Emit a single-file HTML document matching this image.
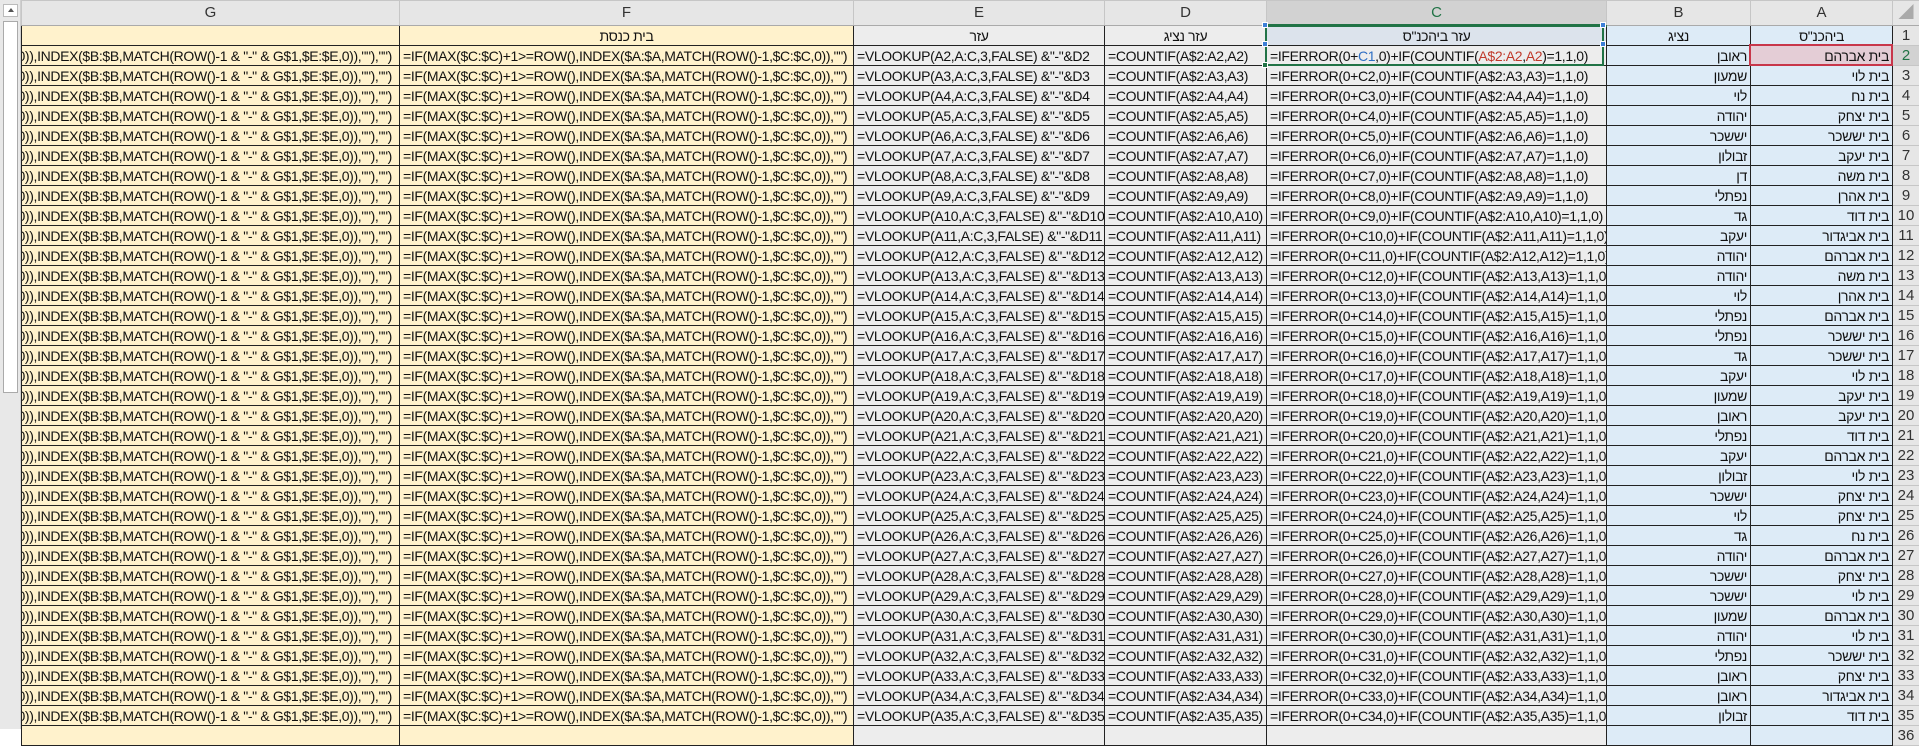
<!DOCTYPE html>
<html><head><meta charset="utf-8"><style>
*{margin:0;padding:0;box-sizing:border-box}
body{width:1919px;height:729px;overflow:hidden;background:#fff;font-family:"Liberation Sans","Noto Sans CJK SC",sans-serif;position:relative}
#sb{position:absolute;left:0;top:0;width:21px;height:729px;background:#e8e8e8;border-right:1px solid #cfcfcf}
#sb .up{position:absolute;left:3px;top:4px;width:15px;height:13px;background:#fff;border:1px solid #bbb}
#sb .up:after{content:"";position:absolute;left:4px;top:3px;border-left:3px solid transparent;border-right:3px solid transparent;border-bottom:4px solid #555}
#sb .th{position:absolute;left:3px;top:21px;width:15px;height:372px;background:#fff;border:1px solid #aaa}
table{position:absolute;left:21px;top:0;width:1898px;border-collapse:collapse;table-layout:fixed;font-size:14px;letter-spacing:-0.35px}
td{height:20px;border:1px solid #222;white-space:nowrap;overflow:hidden;padding:0 3px;line-height:18px;color:#111}
tr.h td{height:25px;background:#e6e6e6;border:1px solid #c6c6c6;border-bottom:1px solid #aaa;text-align:center;font-size:15px;color:#333;letter-spacing:0}
tr.h td.sc{background:#d2d2d2;border-bottom:2px solid #217346;color:#217346}
td.g{background:#fff2cc;padding:0}
td.g div{position:relative;width:370px;height:18px;overflow:hidden}
td.g span{position:absolute;right:0;top:0;white-space:nowrap}
td.f{background:#fff2cc}
td.e,td.d,td.c{background:#ededed}
td.b,td.a{background:#ddebf7;text-align:right;direction:rtl}
td.n{background:#e6e6e6;border:1px solid #c6c6c6;text-align:center;color:#333;letter-spacing:0;font-size:15px}
tr.r1 td{text-align:center}
td.ch{background:#dce3ec!important}
.bl{color:#2f6fc4}.rd{color:#c0392b}
.sel{position:absolute;left:1265px;top:24px;width:339px;height:42px;border:2px solid #217346;pointer-events:none}
.hd{position:absolute;width:6px;height:6px;background:#3d7fd6;border:1px solid #fff}
.asel{position:absolute;left:1749px;top:44px;width:144px;height:22px;border:2px solid #c8364a;pointer-events:none}
</style></head><body>
<div id="sb"><div class="up"></div><div class="th"></div></div>
<table>
<colgroup><col style="width:378px"><col style="width:454px"><col style="width:251px"><col style="width:162px"><col style="width:340px"><col style="width:144px"><col style="width:142px"><col style="width:27px"></colgroup>
<tr class="h"><td>G</td><td>F</td><td>E</td><td>D</td><td class="sc">C</td><td>B</td><td>A</td><td style="background:#e6e6e6;color:#aaa">◢</td></tr>
<tr class="r1"><td class="g"></td><td class="f" style="text-align:center">בית כנסת</td><td class="e">עזר</td><td class="d">עזר נציג</td><td class="c ch">עזר ביהכנ"ס</td><td class="b" style="text-align:center">נציג</td><td class="a" style="text-align:center">ביהכנ"ס</td><td class="n">1</td></tr>
<tr><td class="g"><div><span>MATCH(ROW()-1 &amp; "-" &amp; G$1,$E:$E,0)),INDEX($B:$B,MATCH(ROW()-1 &amp; "-" &amp; G$1,$E:$E,0)),""),"")</span></div></td><td class="f">=IF(MAX($C:$C)+1&gt;=ROW(),INDEX($A:$A,MATCH(ROW()-1,$C:$C,0)),"")</td><td class="e">=VLOOKUP(A2,A:C,3,FALSE) &amp;"-"&amp;D2</td><td class="d">=COUNTIF(A$2:A2,A2)</td><td class="c">=IFERROR(0+<span class="bl">C1</span>,0)+IF(COUNTIF(<span class="rd">A$2:A2</span>,<span class="rd">A2</span>)=1,1,0)</td><td class="b">ראובן</td><td class="a" style="background:#e4cdd6">בית אברהם</td><td class="n" style="background:#d2d2d2;color:#217346">2</td></tr>
<tr><td class="g"><div><span>MATCH(ROW()-1 &amp; "-" &amp; G$1,$E:$E,0)),INDEX($B:$B,MATCH(ROW()-1 &amp; "-" &amp; G$1,$E:$E,0)),""),"")</span></div></td><td class="f">=IF(MAX($C:$C)+1&gt;=ROW(),INDEX($A:$A,MATCH(ROW()-1,$C:$C,0)),"")</td><td class="e">=VLOOKUP(A3,A:C,3,FALSE) &amp;"-"&amp;D3</td><td class="d">=COUNTIF(A$2:A3,A3)</td><td class="c">=IFERROR(0+C2,0)+IF(COUNTIF(A$2:A3,A3)=1,1,0)</td><td class="b">שמעון</td><td class="a">בית לוי</td><td class="n">3</td></tr>
<tr><td class="g"><div><span>MATCH(ROW()-1 &amp; "-" &amp; G$1,$E:$E,0)),INDEX($B:$B,MATCH(ROW()-1 &amp; "-" &amp; G$1,$E:$E,0)),""),"")</span></div></td><td class="f">=IF(MAX($C:$C)+1&gt;=ROW(),INDEX($A:$A,MATCH(ROW()-1,$C:$C,0)),"")</td><td class="e">=VLOOKUP(A4,A:C,3,FALSE) &amp;"-"&amp;D4</td><td class="d">=COUNTIF(A$2:A4,A4)</td><td class="c">=IFERROR(0+C3,0)+IF(COUNTIF(A$2:A4,A4)=1,1,0)</td><td class="b">לוי</td><td class="a">בית נח</td><td class="n">4</td></tr>
<tr><td class="g"><div><span>MATCH(ROW()-1 &amp; "-" &amp; G$1,$E:$E,0)),INDEX($B:$B,MATCH(ROW()-1 &amp; "-" &amp; G$1,$E:$E,0)),""),"")</span></div></td><td class="f">=IF(MAX($C:$C)+1&gt;=ROW(),INDEX($A:$A,MATCH(ROW()-1,$C:$C,0)),"")</td><td class="e">=VLOOKUP(A5,A:C,3,FALSE) &amp;"-"&amp;D5</td><td class="d">=COUNTIF(A$2:A5,A5)</td><td class="c">=IFERROR(0+C4,0)+IF(COUNTIF(A$2:A5,A5)=1,1,0)</td><td class="b">יהודה</td><td class="a">בית יצחק</td><td class="n">5</td></tr>
<tr><td class="g"><div><span>MATCH(ROW()-1 &amp; "-" &amp; G$1,$E:$E,0)),INDEX($B:$B,MATCH(ROW()-1 &amp; "-" &amp; G$1,$E:$E,0)),""),"")</span></div></td><td class="f">=IF(MAX($C:$C)+1&gt;=ROW(),INDEX($A:$A,MATCH(ROW()-1,$C:$C,0)),"")</td><td class="e">=VLOOKUP(A6,A:C,3,FALSE) &amp;"-"&amp;D6</td><td class="d">=COUNTIF(A$2:A6,A6)</td><td class="c">=IFERROR(0+C5,0)+IF(COUNTIF(A$2:A6,A6)=1,1,0)</td><td class="b">יששכר</td><td class="a">בית יששכר</td><td class="n">6</td></tr>
<tr><td class="g"><div><span>MATCH(ROW()-1 &amp; "-" &amp; G$1,$E:$E,0)),INDEX($B:$B,MATCH(ROW()-1 &amp; "-" &amp; G$1,$E:$E,0)),""),"")</span></div></td><td class="f">=IF(MAX($C:$C)+1&gt;=ROW(),INDEX($A:$A,MATCH(ROW()-1,$C:$C,0)),"")</td><td class="e">=VLOOKUP(A7,A:C,3,FALSE) &amp;"-"&amp;D7</td><td class="d">=COUNTIF(A$2:A7,A7)</td><td class="c">=IFERROR(0+C6,0)+IF(COUNTIF(A$2:A7,A7)=1,1,0)</td><td class="b">זבולון</td><td class="a">בית יעקב</td><td class="n">7</td></tr>
<tr><td class="g"><div><span>MATCH(ROW()-1 &amp; "-" &amp; G$1,$E:$E,0)),INDEX($B:$B,MATCH(ROW()-1 &amp; "-" &amp; G$1,$E:$E,0)),""),"")</span></div></td><td class="f">=IF(MAX($C:$C)+1&gt;=ROW(),INDEX($A:$A,MATCH(ROW()-1,$C:$C,0)),"")</td><td class="e">=VLOOKUP(A8,A:C,3,FALSE) &amp;"-"&amp;D8</td><td class="d">=COUNTIF(A$2:A8,A8)</td><td class="c">=IFERROR(0+C7,0)+IF(COUNTIF(A$2:A8,A8)=1,1,0)</td><td class="b">דן</td><td class="a">בית משה</td><td class="n">8</td></tr>
<tr><td class="g"><div><span>MATCH(ROW()-1 &amp; "-" &amp; G$1,$E:$E,0)),INDEX($B:$B,MATCH(ROW()-1 &amp; "-" &amp; G$1,$E:$E,0)),""),"")</span></div></td><td class="f">=IF(MAX($C:$C)+1&gt;=ROW(),INDEX($A:$A,MATCH(ROW()-1,$C:$C,0)),"")</td><td class="e">=VLOOKUP(A9,A:C,3,FALSE) &amp;"-"&amp;D9</td><td class="d">=COUNTIF(A$2:A9,A9)</td><td class="c">=IFERROR(0+C8,0)+IF(COUNTIF(A$2:A9,A9)=1,1,0)</td><td class="b">נפתלי</td><td class="a">בית אהרן</td><td class="n">9</td></tr>
<tr><td class="g"><div><span>MATCH(ROW()-1 &amp; "-" &amp; G$1,$E:$E,0)),INDEX($B:$B,MATCH(ROW()-1 &amp; "-" &amp; G$1,$E:$E,0)),""),"")</span></div></td><td class="f">=IF(MAX($C:$C)+1&gt;=ROW(),INDEX($A:$A,MATCH(ROW()-1,$C:$C,0)),"")</td><td class="e">=VLOOKUP(A10,A:C,3,FALSE) &amp;"-"&amp;D10</td><td class="d">=COUNTIF(A$2:A10,A10)</td><td class="c">=IFERROR(0+C9,0)+IF(COUNTIF(A$2:A10,A10)=1,1,0)</td><td class="b">גד</td><td class="a">בית דוד</td><td class="n">10</td></tr>
<tr><td class="g"><div><span>MATCH(ROW()-1 &amp; "-" &amp; G$1,$E:$E,0)),INDEX($B:$B,MATCH(ROW()-1 &amp; "-" &amp; G$1,$E:$E,0)),""),"")</span></div></td><td class="f">=IF(MAX($C:$C)+1&gt;=ROW(),INDEX($A:$A,MATCH(ROW()-1,$C:$C,0)),"")</td><td class="e">=VLOOKUP(A11,A:C,3,FALSE) &amp;"-"&amp;D11</td><td class="d">=COUNTIF(A$2:A11,A11)</td><td class="c">=IFERROR(0+C10,0)+IF(COUNTIF(A$2:A11,A11)=1,1,0)</td><td class="b">יעקב</td><td class="a">בית אביגדור</td><td class="n">11</td></tr>
<tr><td class="g"><div><span>MATCH(ROW()-1 &amp; "-" &amp; G$1,$E:$E,0)),INDEX($B:$B,MATCH(ROW()-1 &amp; "-" &amp; G$1,$E:$E,0)),""),"")</span></div></td><td class="f">=IF(MAX($C:$C)+1&gt;=ROW(),INDEX($A:$A,MATCH(ROW()-1,$C:$C,0)),"")</td><td class="e">=VLOOKUP(A12,A:C,3,FALSE) &amp;"-"&amp;D12</td><td class="d">=COUNTIF(A$2:A12,A12)</td><td class="c">=IFERROR(0+C11,0)+IF(COUNTIF(A$2:A12,A12)=1,1,0)</td><td class="b">יהודה</td><td class="a">בית אברהם</td><td class="n">12</td></tr>
<tr><td class="g"><div><span>MATCH(ROW()-1 &amp; "-" &amp; G$1,$E:$E,0)),INDEX($B:$B,MATCH(ROW()-1 &amp; "-" &amp; G$1,$E:$E,0)),""),"")</span></div></td><td class="f">=IF(MAX($C:$C)+1&gt;=ROW(),INDEX($A:$A,MATCH(ROW()-1,$C:$C,0)),"")</td><td class="e">=VLOOKUP(A13,A:C,3,FALSE) &amp;"-"&amp;D13</td><td class="d">=COUNTIF(A$2:A13,A13)</td><td class="c">=IFERROR(0+C12,0)+IF(COUNTIF(A$2:A13,A13)=1,1,0)</td><td class="b">יהודה</td><td class="a">בית משה</td><td class="n">13</td></tr>
<tr><td class="g"><div><span>MATCH(ROW()-1 &amp; "-" &amp; G$1,$E:$E,0)),INDEX($B:$B,MATCH(ROW()-1 &amp; "-" &amp; G$1,$E:$E,0)),""),"")</span></div></td><td class="f">=IF(MAX($C:$C)+1&gt;=ROW(),INDEX($A:$A,MATCH(ROW()-1,$C:$C,0)),"")</td><td class="e">=VLOOKUP(A14,A:C,3,FALSE) &amp;"-"&amp;D14</td><td class="d">=COUNTIF(A$2:A14,A14)</td><td class="c">=IFERROR(0+C13,0)+IF(COUNTIF(A$2:A14,A14)=1,1,0)</td><td class="b">לוי</td><td class="a">בית אהרן</td><td class="n">14</td></tr>
<tr><td class="g"><div><span>MATCH(ROW()-1 &amp; "-" &amp; G$1,$E:$E,0)),INDEX($B:$B,MATCH(ROW()-1 &amp; "-" &amp; G$1,$E:$E,0)),""),"")</span></div></td><td class="f">=IF(MAX($C:$C)+1&gt;=ROW(),INDEX($A:$A,MATCH(ROW()-1,$C:$C,0)),"")</td><td class="e">=VLOOKUP(A15,A:C,3,FALSE) &amp;"-"&amp;D15</td><td class="d">=COUNTIF(A$2:A15,A15)</td><td class="c">=IFERROR(0+C14,0)+IF(COUNTIF(A$2:A15,A15)=1,1,0)</td><td class="b">נפתלי</td><td class="a">בית אברהם</td><td class="n">15</td></tr>
<tr><td class="g"><div><span>MATCH(ROW()-1 &amp; "-" &amp; G$1,$E:$E,0)),INDEX($B:$B,MATCH(ROW()-1 &amp; "-" &amp; G$1,$E:$E,0)),""),"")</span></div></td><td class="f">=IF(MAX($C:$C)+1&gt;=ROW(),INDEX($A:$A,MATCH(ROW()-1,$C:$C,0)),"")</td><td class="e">=VLOOKUP(A16,A:C,3,FALSE) &amp;"-"&amp;D16</td><td class="d">=COUNTIF(A$2:A16,A16)</td><td class="c">=IFERROR(0+C15,0)+IF(COUNTIF(A$2:A16,A16)=1,1,0)</td><td class="b">נפתלי</td><td class="a">בית יששכר</td><td class="n">16</td></tr>
<tr><td class="g"><div><span>MATCH(ROW()-1 &amp; "-" &amp; G$1,$E:$E,0)),INDEX($B:$B,MATCH(ROW()-1 &amp; "-" &amp; G$1,$E:$E,0)),""),"")</span></div></td><td class="f">=IF(MAX($C:$C)+1&gt;=ROW(),INDEX($A:$A,MATCH(ROW()-1,$C:$C,0)),"")</td><td class="e">=VLOOKUP(A17,A:C,3,FALSE) &amp;"-"&amp;D17</td><td class="d">=COUNTIF(A$2:A17,A17)</td><td class="c">=IFERROR(0+C16,0)+IF(COUNTIF(A$2:A17,A17)=1,1,0)</td><td class="b">גד</td><td class="a">בית יששכר</td><td class="n">17</td></tr>
<tr><td class="g"><div><span>MATCH(ROW()-1 &amp; "-" &amp; G$1,$E:$E,0)),INDEX($B:$B,MATCH(ROW()-1 &amp; "-" &amp; G$1,$E:$E,0)),""),"")</span></div></td><td class="f">=IF(MAX($C:$C)+1&gt;=ROW(),INDEX($A:$A,MATCH(ROW()-1,$C:$C,0)),"")</td><td class="e">=VLOOKUP(A18,A:C,3,FALSE) &amp;"-"&amp;D18</td><td class="d">=COUNTIF(A$2:A18,A18)</td><td class="c">=IFERROR(0+C17,0)+IF(COUNTIF(A$2:A18,A18)=1,1,0)</td><td class="b">יעקב</td><td class="a">בית לוי</td><td class="n">18</td></tr>
<tr><td class="g"><div><span>MATCH(ROW()-1 &amp; "-" &amp; G$1,$E:$E,0)),INDEX($B:$B,MATCH(ROW()-1 &amp; "-" &amp; G$1,$E:$E,0)),""),"")</span></div></td><td class="f">=IF(MAX($C:$C)+1&gt;=ROW(),INDEX($A:$A,MATCH(ROW()-1,$C:$C,0)),"")</td><td class="e">=VLOOKUP(A19,A:C,3,FALSE) &amp;"-"&amp;D19</td><td class="d">=COUNTIF(A$2:A19,A19)</td><td class="c">=IFERROR(0+C18,0)+IF(COUNTIF(A$2:A19,A19)=1,1,0)</td><td class="b">שמעון</td><td class="a">בית יעקב</td><td class="n">19</td></tr>
<tr><td class="g"><div><span>MATCH(ROW()-1 &amp; "-" &amp; G$1,$E:$E,0)),INDEX($B:$B,MATCH(ROW()-1 &amp; "-" &amp; G$1,$E:$E,0)),""),"")</span></div></td><td class="f">=IF(MAX($C:$C)+1&gt;=ROW(),INDEX($A:$A,MATCH(ROW()-1,$C:$C,0)),"")</td><td class="e">=VLOOKUP(A20,A:C,3,FALSE) &amp;"-"&amp;D20</td><td class="d">=COUNTIF(A$2:A20,A20)</td><td class="c">=IFERROR(0+C19,0)+IF(COUNTIF(A$2:A20,A20)=1,1,0)</td><td class="b">ראובן</td><td class="a">בית יעקב</td><td class="n">20</td></tr>
<tr><td class="g"><div><span>MATCH(ROW()-1 &amp; "-" &amp; G$1,$E:$E,0)),INDEX($B:$B,MATCH(ROW()-1 &amp; "-" &amp; G$1,$E:$E,0)),""),"")</span></div></td><td class="f">=IF(MAX($C:$C)+1&gt;=ROW(),INDEX($A:$A,MATCH(ROW()-1,$C:$C,0)),"")</td><td class="e">=VLOOKUP(A21,A:C,3,FALSE) &amp;"-"&amp;D21</td><td class="d">=COUNTIF(A$2:A21,A21)</td><td class="c">=IFERROR(0+C20,0)+IF(COUNTIF(A$2:A21,A21)=1,1,0)</td><td class="b">נפתלי</td><td class="a">בית דוד</td><td class="n">21</td></tr>
<tr><td class="g"><div><span>MATCH(ROW()-1 &amp; "-" &amp; G$1,$E:$E,0)),INDEX($B:$B,MATCH(ROW()-1 &amp; "-" &amp; G$1,$E:$E,0)),""),"")</span></div></td><td class="f">=IF(MAX($C:$C)+1&gt;=ROW(),INDEX($A:$A,MATCH(ROW()-1,$C:$C,0)),"")</td><td class="e">=VLOOKUP(A22,A:C,3,FALSE) &amp;"-"&amp;D22</td><td class="d">=COUNTIF(A$2:A22,A22)</td><td class="c">=IFERROR(0+C21,0)+IF(COUNTIF(A$2:A22,A22)=1,1,0)</td><td class="b">יעקב</td><td class="a">בית אברהם</td><td class="n">22</td></tr>
<tr><td class="g"><div><span>MATCH(ROW()-1 &amp; "-" &amp; G$1,$E:$E,0)),INDEX($B:$B,MATCH(ROW()-1 &amp; "-" &amp; G$1,$E:$E,0)),""),"")</span></div></td><td class="f">=IF(MAX($C:$C)+1&gt;=ROW(),INDEX($A:$A,MATCH(ROW()-1,$C:$C,0)),"")</td><td class="e">=VLOOKUP(A23,A:C,3,FALSE) &amp;"-"&amp;D23</td><td class="d">=COUNTIF(A$2:A23,A23)</td><td class="c">=IFERROR(0+C22,0)+IF(COUNTIF(A$2:A23,A23)=1,1,0)</td><td class="b">זבולון</td><td class="a">בית לוי</td><td class="n">23</td></tr>
<tr><td class="g"><div><span>MATCH(ROW()-1 &amp; "-" &amp; G$1,$E:$E,0)),INDEX($B:$B,MATCH(ROW()-1 &amp; "-" &amp; G$1,$E:$E,0)),""),"")</span></div></td><td class="f">=IF(MAX($C:$C)+1&gt;=ROW(),INDEX($A:$A,MATCH(ROW()-1,$C:$C,0)),"")</td><td class="e">=VLOOKUP(A24,A:C,3,FALSE) &amp;"-"&amp;D24</td><td class="d">=COUNTIF(A$2:A24,A24)</td><td class="c">=IFERROR(0+C23,0)+IF(COUNTIF(A$2:A24,A24)=1,1,0)</td><td class="b">יששכר</td><td class="a">בית יצחק</td><td class="n">24</td></tr>
<tr><td class="g"><div><span>MATCH(ROW()-1 &amp; "-" &amp; G$1,$E:$E,0)),INDEX($B:$B,MATCH(ROW()-1 &amp; "-" &amp; G$1,$E:$E,0)),""),"")</span></div></td><td class="f">=IF(MAX($C:$C)+1&gt;=ROW(),INDEX($A:$A,MATCH(ROW()-1,$C:$C,0)),"")</td><td class="e">=VLOOKUP(A25,A:C,3,FALSE) &amp;"-"&amp;D25</td><td class="d">=COUNTIF(A$2:A25,A25)</td><td class="c">=IFERROR(0+C24,0)+IF(COUNTIF(A$2:A25,A25)=1,1,0)</td><td class="b">לוי</td><td class="a">בית יצחק</td><td class="n">25</td></tr>
<tr><td class="g"><div><span>MATCH(ROW()-1 &amp; "-" &amp; G$1,$E:$E,0)),INDEX($B:$B,MATCH(ROW()-1 &amp; "-" &amp; G$1,$E:$E,0)),""),"")</span></div></td><td class="f">=IF(MAX($C:$C)+1&gt;=ROW(),INDEX($A:$A,MATCH(ROW()-1,$C:$C,0)),"")</td><td class="e">=VLOOKUP(A26,A:C,3,FALSE) &amp;"-"&amp;D26</td><td class="d">=COUNTIF(A$2:A26,A26)</td><td class="c">=IFERROR(0+C25,0)+IF(COUNTIF(A$2:A26,A26)=1,1,0)</td><td class="b">גד</td><td class="a">בית נח</td><td class="n">26</td></tr>
<tr><td class="g"><div><span>MATCH(ROW()-1 &amp; "-" &amp; G$1,$E:$E,0)),INDEX($B:$B,MATCH(ROW()-1 &amp; "-" &amp; G$1,$E:$E,0)),""),"")</span></div></td><td class="f">=IF(MAX($C:$C)+1&gt;=ROW(),INDEX($A:$A,MATCH(ROW()-1,$C:$C,0)),"")</td><td class="e">=VLOOKUP(A27,A:C,3,FALSE) &amp;"-"&amp;D27</td><td class="d">=COUNTIF(A$2:A27,A27)</td><td class="c">=IFERROR(0+C26,0)+IF(COUNTIF(A$2:A27,A27)=1,1,0)</td><td class="b">יהודה</td><td class="a">בית אברהם</td><td class="n">27</td></tr>
<tr><td class="g"><div><span>MATCH(ROW()-1 &amp; "-" &amp; G$1,$E:$E,0)),INDEX($B:$B,MATCH(ROW()-1 &amp; "-" &amp; G$1,$E:$E,0)),""),"")</span></div></td><td class="f">=IF(MAX($C:$C)+1&gt;=ROW(),INDEX($A:$A,MATCH(ROW()-1,$C:$C,0)),"")</td><td class="e">=VLOOKUP(A28,A:C,3,FALSE) &amp;"-"&amp;D28</td><td class="d">=COUNTIF(A$2:A28,A28)</td><td class="c">=IFERROR(0+C27,0)+IF(COUNTIF(A$2:A28,A28)=1,1,0)</td><td class="b">יששכר</td><td class="a">בית יצחק</td><td class="n">28</td></tr>
<tr><td class="g"><div><span>MATCH(ROW()-1 &amp; "-" &amp; G$1,$E:$E,0)),INDEX($B:$B,MATCH(ROW()-1 &amp; "-" &amp; G$1,$E:$E,0)),""),"")</span></div></td><td class="f">=IF(MAX($C:$C)+1&gt;=ROW(),INDEX($A:$A,MATCH(ROW()-1,$C:$C,0)),"")</td><td class="e">=VLOOKUP(A29,A:C,3,FALSE) &amp;"-"&amp;D29</td><td class="d">=COUNTIF(A$2:A29,A29)</td><td class="c">=IFERROR(0+C28,0)+IF(COUNTIF(A$2:A29,A29)=1,1,0)</td><td class="b">יששכר</td><td class="a">בית לוי</td><td class="n">29</td></tr>
<tr><td class="g"><div><span>MATCH(ROW()-1 &amp; "-" &amp; G$1,$E:$E,0)),INDEX($B:$B,MATCH(ROW()-1 &amp; "-" &amp; G$1,$E:$E,0)),""),"")</span></div></td><td class="f">=IF(MAX($C:$C)+1&gt;=ROW(),INDEX($A:$A,MATCH(ROW()-1,$C:$C,0)),"")</td><td class="e">=VLOOKUP(A30,A:C,3,FALSE) &amp;"-"&amp;D30</td><td class="d">=COUNTIF(A$2:A30,A30)</td><td class="c">=IFERROR(0+C29,0)+IF(COUNTIF(A$2:A30,A30)=1,1,0)</td><td class="b">שמעון</td><td class="a">בית אברהם</td><td class="n">30</td></tr>
<tr><td class="g"><div><span>MATCH(ROW()-1 &amp; "-" &amp; G$1,$E:$E,0)),INDEX($B:$B,MATCH(ROW()-1 &amp; "-" &amp; G$1,$E:$E,0)),""),"")</span></div></td><td class="f">=IF(MAX($C:$C)+1&gt;=ROW(),INDEX($A:$A,MATCH(ROW()-1,$C:$C,0)),"")</td><td class="e">=VLOOKUP(A31,A:C,3,FALSE) &amp;"-"&amp;D31</td><td class="d">=COUNTIF(A$2:A31,A31)</td><td class="c">=IFERROR(0+C30,0)+IF(COUNTIF(A$2:A31,A31)=1,1,0)</td><td class="b">יהודה</td><td class="a">בית לוי</td><td class="n">31</td></tr>
<tr><td class="g"><div><span>MATCH(ROW()-1 &amp; "-" &amp; G$1,$E:$E,0)),INDEX($B:$B,MATCH(ROW()-1 &amp; "-" &amp; G$1,$E:$E,0)),""),"")</span></div></td><td class="f">=IF(MAX($C:$C)+1&gt;=ROW(),INDEX($A:$A,MATCH(ROW()-1,$C:$C,0)),"")</td><td class="e">=VLOOKUP(A32,A:C,3,FALSE) &amp;"-"&amp;D32</td><td class="d">=COUNTIF(A$2:A32,A32)</td><td class="c">=IFERROR(0+C31,0)+IF(COUNTIF(A$2:A32,A32)=1,1,0)</td><td class="b">נפתלי</td><td class="a">בית יששכר</td><td class="n">32</td></tr>
<tr><td class="g"><div><span>MATCH(ROW()-1 &amp; "-" &amp; G$1,$E:$E,0)),INDEX($B:$B,MATCH(ROW()-1 &amp; "-" &amp; G$1,$E:$E,0)),""),"")</span></div></td><td class="f">=IF(MAX($C:$C)+1&gt;=ROW(),INDEX($A:$A,MATCH(ROW()-1,$C:$C,0)),"")</td><td class="e">=VLOOKUP(A33,A:C,3,FALSE) &amp;"-"&amp;D33</td><td class="d">=COUNTIF(A$2:A33,A33)</td><td class="c">=IFERROR(0+C32,0)+IF(COUNTIF(A$2:A33,A33)=1,1,0)</td><td class="b">ראובן</td><td class="a">בית יצחק</td><td class="n">33</td></tr>
<tr><td class="g"><div><span>MATCH(ROW()-1 &amp; "-" &amp; G$1,$E:$E,0)),INDEX($B:$B,MATCH(ROW()-1 &amp; "-" &amp; G$1,$E:$E,0)),""),"")</span></div></td><td class="f">=IF(MAX($C:$C)+1&gt;=ROW(),INDEX($A:$A,MATCH(ROW()-1,$C:$C,0)),"")</td><td class="e">=VLOOKUP(A34,A:C,3,FALSE) &amp;"-"&amp;D34</td><td class="d">=COUNTIF(A$2:A34,A34)</td><td class="c">=IFERROR(0+C33,0)+IF(COUNTIF(A$2:A34,A34)=1,1,0)</td><td class="b">ראובן</td><td class="a">בית אביגדור</td><td class="n">34</td></tr>
<tr><td class="g"><div><span>MATCH(ROW()-1 &amp; "-" &amp; G$1,$E:$E,0)),INDEX($B:$B,MATCH(ROW()-1 &amp; "-" &amp; G$1,$E:$E,0)),""),"")</span></div></td><td class="f">=IF(MAX($C:$C)+1&gt;=ROW(),INDEX($A:$A,MATCH(ROW()-1,$C:$C,0)),"")</td><td class="e">=VLOOKUP(A35,A:C,3,FALSE) &amp;"-"&amp;D35</td><td class="d">=COUNTIF(A$2:A35,A35)</td><td class="c">=IFERROR(0+C34,0)+IF(COUNTIF(A$2:A35,A35)=1,1,0)</td><td class="b">זבולון</td><td class="a">בית דוד</td><td class="n">35</td></tr>
<tr><td class="g"></td><td class="f"></td><td class="e"></td><td class="d"></td><td class="c"></td><td class="b"></td><td class="a"></td><td class="n">36</td></tr>
</table>
<div class="sel"></div>
<div class="hd" style="left:1262px;top:22px"></div><div class="hd" style="left:1600px;top:22px"></div>
<div class="hd" style="left:1262px;top:41px"></div><div class="hd" style="left:1600px;top:41px"></div>
<div class="hd" style="left:1262px;top:62px;background:#217346"></div>
<div class="asel"></div>
</body></html>
